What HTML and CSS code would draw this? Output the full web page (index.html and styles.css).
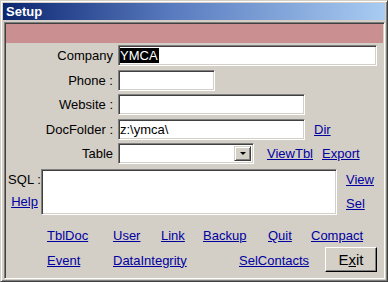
FILE: index.html
```html
<!DOCTYPE html>
<html lang="en">
<head>
  <meta charset="UTF-8" />
  <title>Setup</title>
  <link rel="stylesheet" href="styles.css">
</head>
<body>
  <div class="window">
    <div class="titlebar">Setup</div>
    <div class="client">
      <div class="header"></div>
      <div class="detail">
        <div class="fields">
          <div class="row">
            <span class="label">Company</span>
            <div class="field w-company"><span class="selected">YMCA</span></div>
          </div>
          <div class="row">
            <span class="label">Phone :</span>
            <div class="field w-phone"></div>
          </div>
          <div class="row">
            <span class="label">Website :</span>
            <div class="field w-site"></div>
          </div>
          <div class="row">
            <span class="label">DocFolder :</span>
            <div class="field w-site">z:\ymca\</div>
            <a class="link dir">Dir</a>
          </div>
          <div class="row">
            <span class="label">Table</span>
            <div class="field combo">
              <span class="drop"><i class="arrow"></i></span>
            </div>
            <a class="link viewtbl">ViewTbl</a>
            <a class="link export">Export</a>
          </div>
        </div>

        <div class="sql-row">
          <div class="sql-side">
            <span>SQL :</span>
            <a class="link">Help</a>
          </div>
          <div class="field sql"></div>
          <div class="sql-links">
            <a class="link">View</a>
            <a class="link">Sel</a>
          </div>
        </div>

        <div class="links top">
          <a class="link">TblDoc</a>
          <a class="link">User</a>
          <a class="link">Link</a>
          <a class="link">Backup</a>
          <a class="link">Quit</a>
          <a class="link">Compact</a>
        </div>
        <div class="links bottom">
          <a class="link">Event</a>
          <a class="link">DataIntegrity</a>
          <a class="link">SelContacts</a>
          <button class="exit">E<u>x</u>it</button>
        </div>
      </div>
    </div>
  </div>
</body>
</html>
```

FILE: styles.css
```css
body {
  margin: 0;
  font-family: "Liberation Sans", Arial, sans-serif;
  font-size: 13px;
  color: #000;
  background: #d4d0c8;
}

.window {
  width: 388px;
  height: 282px;
  box-sizing: border-box;
  border: 1px solid;
  border-color: #d4d0c8 #404040 #404040 #d4d0c8;
  box-shadow: inset 1px 1px #fff, inset -1px -1px #808080;
  padding: 2px;
  background: #d3cec6;
  display: flex;
  flex-direction: column;
}

.titlebar {
  height: 17px;
  margin-bottom: 2px;
  padding-left: 3px;
  background: linear-gradient(to right, #0c2670, #5a7cc0 45%, #a8ccf2);
  color: #fff;
  font-weight: bold;
  font-size: 13px;
  line-height: 17px;
}

.client {
  flex: 1;
  margin-left: 1px;
  border: 1px solid;
  border-color: #808080 #fff #fff #808080;
  box-shadow: inset 1px 1px #404040, inset -1px -1px #d4d0c8;
  padding: 1px;
  display: flex;
  flex-direction: column;
}

.header {
  height: 19px;
  background: #c98f91;
}

.detail {
  padding-top: 2px;
}

.fields {
  display: flex;
  flex-direction: column;
  gap: 3.5px;
}

.row {
  display: flex;
  align-items: center;
  height: 21px;
}

.label {
  width: 107px;
  margin-right: 5px;
  text-align: right;
}

.field {
  box-sizing: border-box;
  height: 21px;
  background: #fff;
  border: 1px solid;
  border-color: #808080 #fff #fff #808080;
  box-shadow: inset 1px 1px #404040, inset -1px -1px #d4d0c8;
  padding: 2px 1px;
  line-height: 15px;
  position: relative;
}

.w-company { width: 259px; }
.w-phone { width: 97px; }
.w-site { width: 187px; }
.combo { width: 136px; }

.selected {
  background: #000;
  color: #fff;
  padding-right: 1px;
}

.drop {
  position: absolute;
  right: 2px;
  top: 2px;
  width: 17px;
  height: 15px;
  box-sizing: border-box;
  background: #d4d0c8;
  border: 1px solid;
  border-color: #d4d0c8 #404040 #404040 #d4d0c8;
  box-shadow: inset 1px 1px #fff, inset -1px -1px #808080;
  display: flex;
  align-items: center;
  justify-content: center;
}

.arrow {
  width: 0;
  height: 0;
  border-left: 3px solid transparent;
  border-right: 3px solid transparent;
  border-top: 3px solid #000;
}

.link {
  color: #0000a0;
  text-decoration: underline;
}

.dir { margin-left: 9px; }
.viewtbl { margin-left: 13px; }
.export { margin-left: 9px; }

.sql-row {
  display: flex;
  margin-top: 5px;
}

.sql-side {
  box-sizing: border-box;
  width: 35px;
  display: flex;
  flex-direction: column;
  align-items: center;
  gap: 7px;
  padding-top: 3px;
  padding-left: 2px;
}

.sql {
  width: 296px;
  height: 46px;
}

.sql-links {
  margin-left: 9px;
  display: flex;
  flex-direction: column;
  gap: 9px;
  padding-top: 3px;
}

.links {
  display: grid;
  padding-left: 41px;
  align-items: center;
}

.links.top {
  margin-top: 13px;
  grid-template-columns: 66px 48px 42px 65px 43px auto;
}

.links.bottom {
  margin-top: 4px;
  grid-template-columns: 66px 126px 86px auto;
}

.links.bottom .link {
  padding-top: 1px;
}

.exit {
  width: 52px;
  height: 25px;
  padding: 0;
  font-family: "Liberation Sans", Arial, sans-serif;
  font-size: 15px;
  color: #000;
  background: #d4d0c8;
  border: 1px solid;
  border-color: #fff #000 #000 #fff;
  box-shadow: inset -1px -1px #808080, inset 1px 1px #d4d0c8;
}
```
